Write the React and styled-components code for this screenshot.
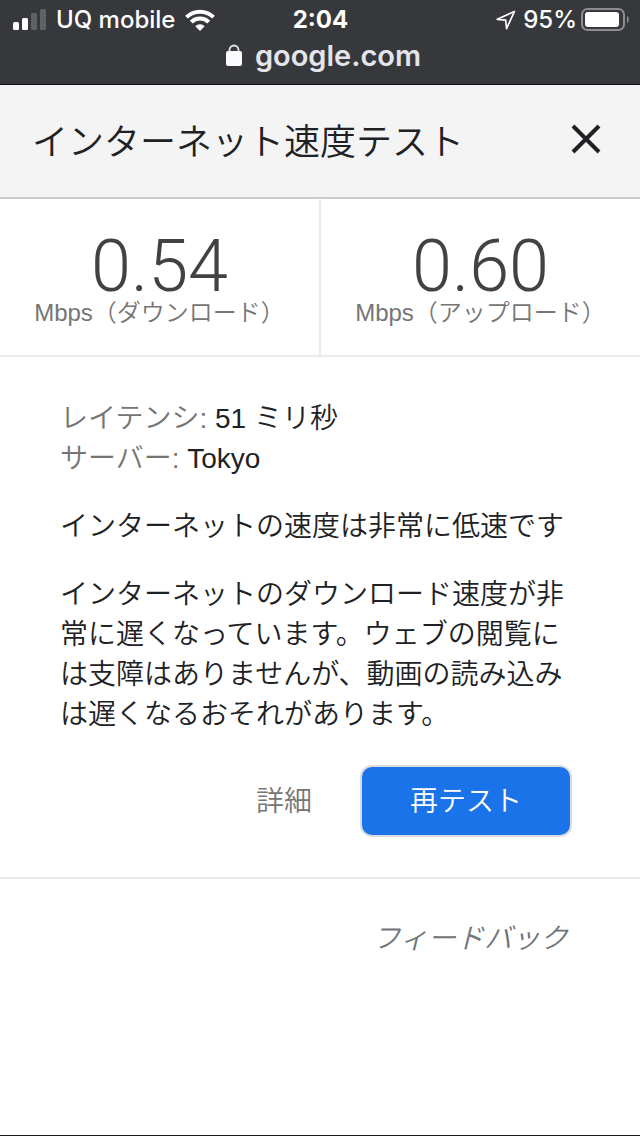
import styled, { createGlobalStyle } from "styled-components";

const stats = [
  { value: "0.54", label: "Mbps（ダウンロード）" },
  { value: "0.60", label: "Mbps（アップロード）" },
];

const details = [
  { name: "レイテンシ", value: "51 ミリ秒" },
  { name: "サーバー", value: "Tokyo" },
];

const SignalIcon = () => (
  <svg width="34" height="22" viewBox="0 0 34 22" aria-hidden="true">
    <rect x="1" y="13" width="6" height="8" rx="1.5" fill="#fff" />
    <rect x="10" y="9" width="6" height="12" rx="1.5" fill="#fff" />
    <rect x="19" y="4" width="6" height="17" rx="1.5" fill="#606164" />
    <rect x="28" y="0" width="6" height="21" rx="1.5" fill="#606164" />
  </svg>
);

const WifiIcon = () => (
  <svg width="30" height="22" viewBox="0 0 30 22" aria-hidden="true">
    <g fill="none" stroke="#fff" strokeWidth="4">
      <path d="M1.5 8.2a19.2 19.2 0 0 1 27 0" />
      <path d="M6.3 13.2a12.3 12.3 0 0 1 17.4 0" />
    </g>
    <path d="M15 22l-4.7-4.8a6.7 6.7 0 0 1 9.4 0z" fill="#fff" />
  </svg>
);

const LocationIcon = () => (
  <svg width="24" height="20" viewBox="0 0 24 20" aria-hidden="true">
    <path
      d="M19.4 1.5L2.3 9.3l8.4.8.9 8.5z"
      fill="none"
      stroke="#fff"
      strokeWidth="1.7"
      strokeLinejoin="round"
    />
  </svg>
);

const BatteryIcon = () => (
  <svg width="48" height="24" viewBox="0 0 48 24" aria-hidden="true">
    <rect
      x="1"
      y="1"
      width="42"
      height="21"
      rx="5.5"
      fill="none"
      stroke="#8c8d90"
      strokeWidth="2"
    />
    <rect x="4" y="4" width="34" height="15" rx="3" fill="#fff" />
    <path d="M46 8c2.4 1.2 2.4 6 0 7.2z" fill="#8c8d90" />
  </svg>
);

const LockIcon = () => (
  <svg width="24" height="24" viewBox="0 0 24 24" aria-hidden="true">
    <path
      d="M10.5 9V6a4.5 4.5 0 0 1 9 0v3"
      fill="none"
      stroke="#e6e7ec"
      strokeWidth="1.8"
    />
    <rect x="7" y="7" width="16" height="15" rx="2" fill="#fbfbff" />
  </svg>
);

const CloseIcon = () => (
  <svg width="32" height="32" viewBox="0 0 32 32" aria-hidden="true">
    <path d="M3 3l26 26M29 3L3 29" stroke="#202124" strokeWidth="4" />
  </svg>
);

const App = () => {
  return (
    <Page>
      <GlobalStyle />
      <BrowserBar>
        <StatusRow>
          <StatusGroup>
            <SignalIcon />
            <span>UQ mobile</span>
            <WifiIcon />
          </StatusGroup>
          <Clock>2:04</Clock>
          <StatusGroup $end>
            <LocationIcon />
            <span>95%</span>
            <BatteryIcon />
          </StatusGroup>
        </StatusRow>
        <AddressRow>
          <LockIcon />
          <span>google.com</span>
        </AddressRow>
      </BrowserBar>
      <Header>
        <Title>インターネット速度テスト</Title>
        <CloseButton type="button" aria-label="閉じる">
          <CloseIcon />
        </CloseButton>
      </Header>
      <Stats>
        {stats.map(({ value, label }) => (
          <Stat key={label}>
            <StatValue>{value}</StatValue>
            <StatLabel>{label}</StatLabel>
          </Stat>
        ))}
      </Stats>
      <Result>
        <div>
          {details.map(({ name, value }) => (
            <Detail key={name}>
              <span>{name}:</span> {value}
            </Detail>
          ))}
        </div>
        <Summary>インターネットの速度は非常に低速です</Summary>
        <Description>
          インターネットのダウンロード速度が非常に遅くなっています。ウェブの閲覧には支障はありませんが、動画の読み込みは遅くなるおそれがあります。
        </Description>
        <Actions>
          <TextButton type="button">詳細</TextButton>
          <PrimaryButton type="button">再テスト</PrimaryButton>
        </Actions>
      </Result>
      <Footer>
        <FeedbackLink href="#feedback">フィードバック</FeedbackLink>
      </Footer>
    </Page>
  );
};

export default App;

const GlobalStyle = createGlobalStyle`
  * {
    box-sizing: border-box;
  }

  body {
    margin: 0;
    background-color: #fff;
  }

  h1, h2, p {
    margin: 0;
    font-weight: inherit;
  }

  svg {
    display: block;
    flex-shrink: 0;
  }

  button {
    padding: 0;
    border: 0;
    background: none;
    font: inherit;
    cursor: pointer;
  }
`;

const Page = styled.div`
  display: flex;
  flex-direction: column;
  min-height: 100vh;
  border-bottom: 1px solid #1c1c1e;
  color: #202124;
  font-family: "Liberation Sans", "Noto Sans CJK JP", sans-serif;
  font-size: 28px;
  font-weight: 350;
  line-height: 40px;
`;

const BrowserBar = styled.div`
  padding-bottom: 12px;
  border-bottom: 1px solid #111014;
  background-color: #37383c;
  color: #fff;
  font-family: Inter, sans-serif;
`;

const StatusRow = styled.div`
  display: grid;
  grid-template-columns: 1fr auto 1fr;
  align-items: center;
  padding: 0 11px 0 12px;
  font-size: 24px;
  font-weight: 500;
`;

const StatusGroup = styled.div`
  display: flex;
  align-items: center;
  justify-content: ${({ $end }) => ($end ? "flex-end" : "flex-start")};
  gap: ${({ $end }) => ($end ? 4 : 10)}px;
`;

const Clock = styled.span`
  font-weight: 700;
`;

const AddressRow = styled.div`
  display: flex;
  align-items: center;
  justify-content: center;
  gap: 12px;
  color: #e3e5ea;
  font-size: 29px;
  font-weight: 600;
  line-height: 32px;
`;

const Header = styled.header`
  display: flex;
  align-items: center;
  justify-content: space-between;
  padding: 26px 38px 30px 32px;
  border-bottom: 2px solid #cacaca;
  background-color: #f4f4f4;
`;

const Title = styled.h1`
  padding-top: 8px;
  font-size: 36px;
  line-height: 48px;
`;

const CloseButton = styled.button`
  color: #202124;
`;

const Stats = styled.div`
  display: grid;
  grid-template-columns: 1fr 1fr;
  gap: 2px;
  border-bottom: 2px solid #ebebeb;
  background-color: #ebebeb;
`;

const Stat = styled.div`
  padding: 34px 0 30px;
  background-color: #fff;
  text-align: center;
`;

const StatValue = styled.div`
  color: #424242;
  font-family: Roboto, sans-serif;
  font-size: 72px;
  font-weight: 300;
  line-height: 68px;
`;

const StatLabel = styled.div`
  color: #757575;
  font-size: 24px;
  line-height: 24px;
`;

const Result = styled.main`
  display: flex;
  flex-direction: column;
  gap: 28px;
  padding: 42px 68px 40px 60px;
  border-bottom: 2px solid #ebebeb;
`;

const Detail = styled.p`
  span {
    color: #757575;
  }
`;

const Summary = styled.h2`
  font-size: 28px;
`;

const Description = styled.p`
  word-break: break-all;
`;

const Actions = styled.div`
  display: flex;
  align-items: center;
  justify-content: flex-end;
  gap: 48px;
  padding-top: 2px;
`;

const TextButton = styled.button`
  && {
    padding-top: 2px;
    color: #757575;
  }
`;

const PrimaryButton = styled.button`
  && {
    padding: 15px 48px 13px;
    border: 2px solid #dadce0;
    border-radius: 12px;
    background-color: #1a73e8;
    color: #fff;
  }
`;

const Footer = styled.footer`
  padding: 40px 72px;
  text-align: right;
`;

const FeedbackLink = styled.a`
  color: #70757a;
  font-style: italic;
  text-decoration: none;
`;
